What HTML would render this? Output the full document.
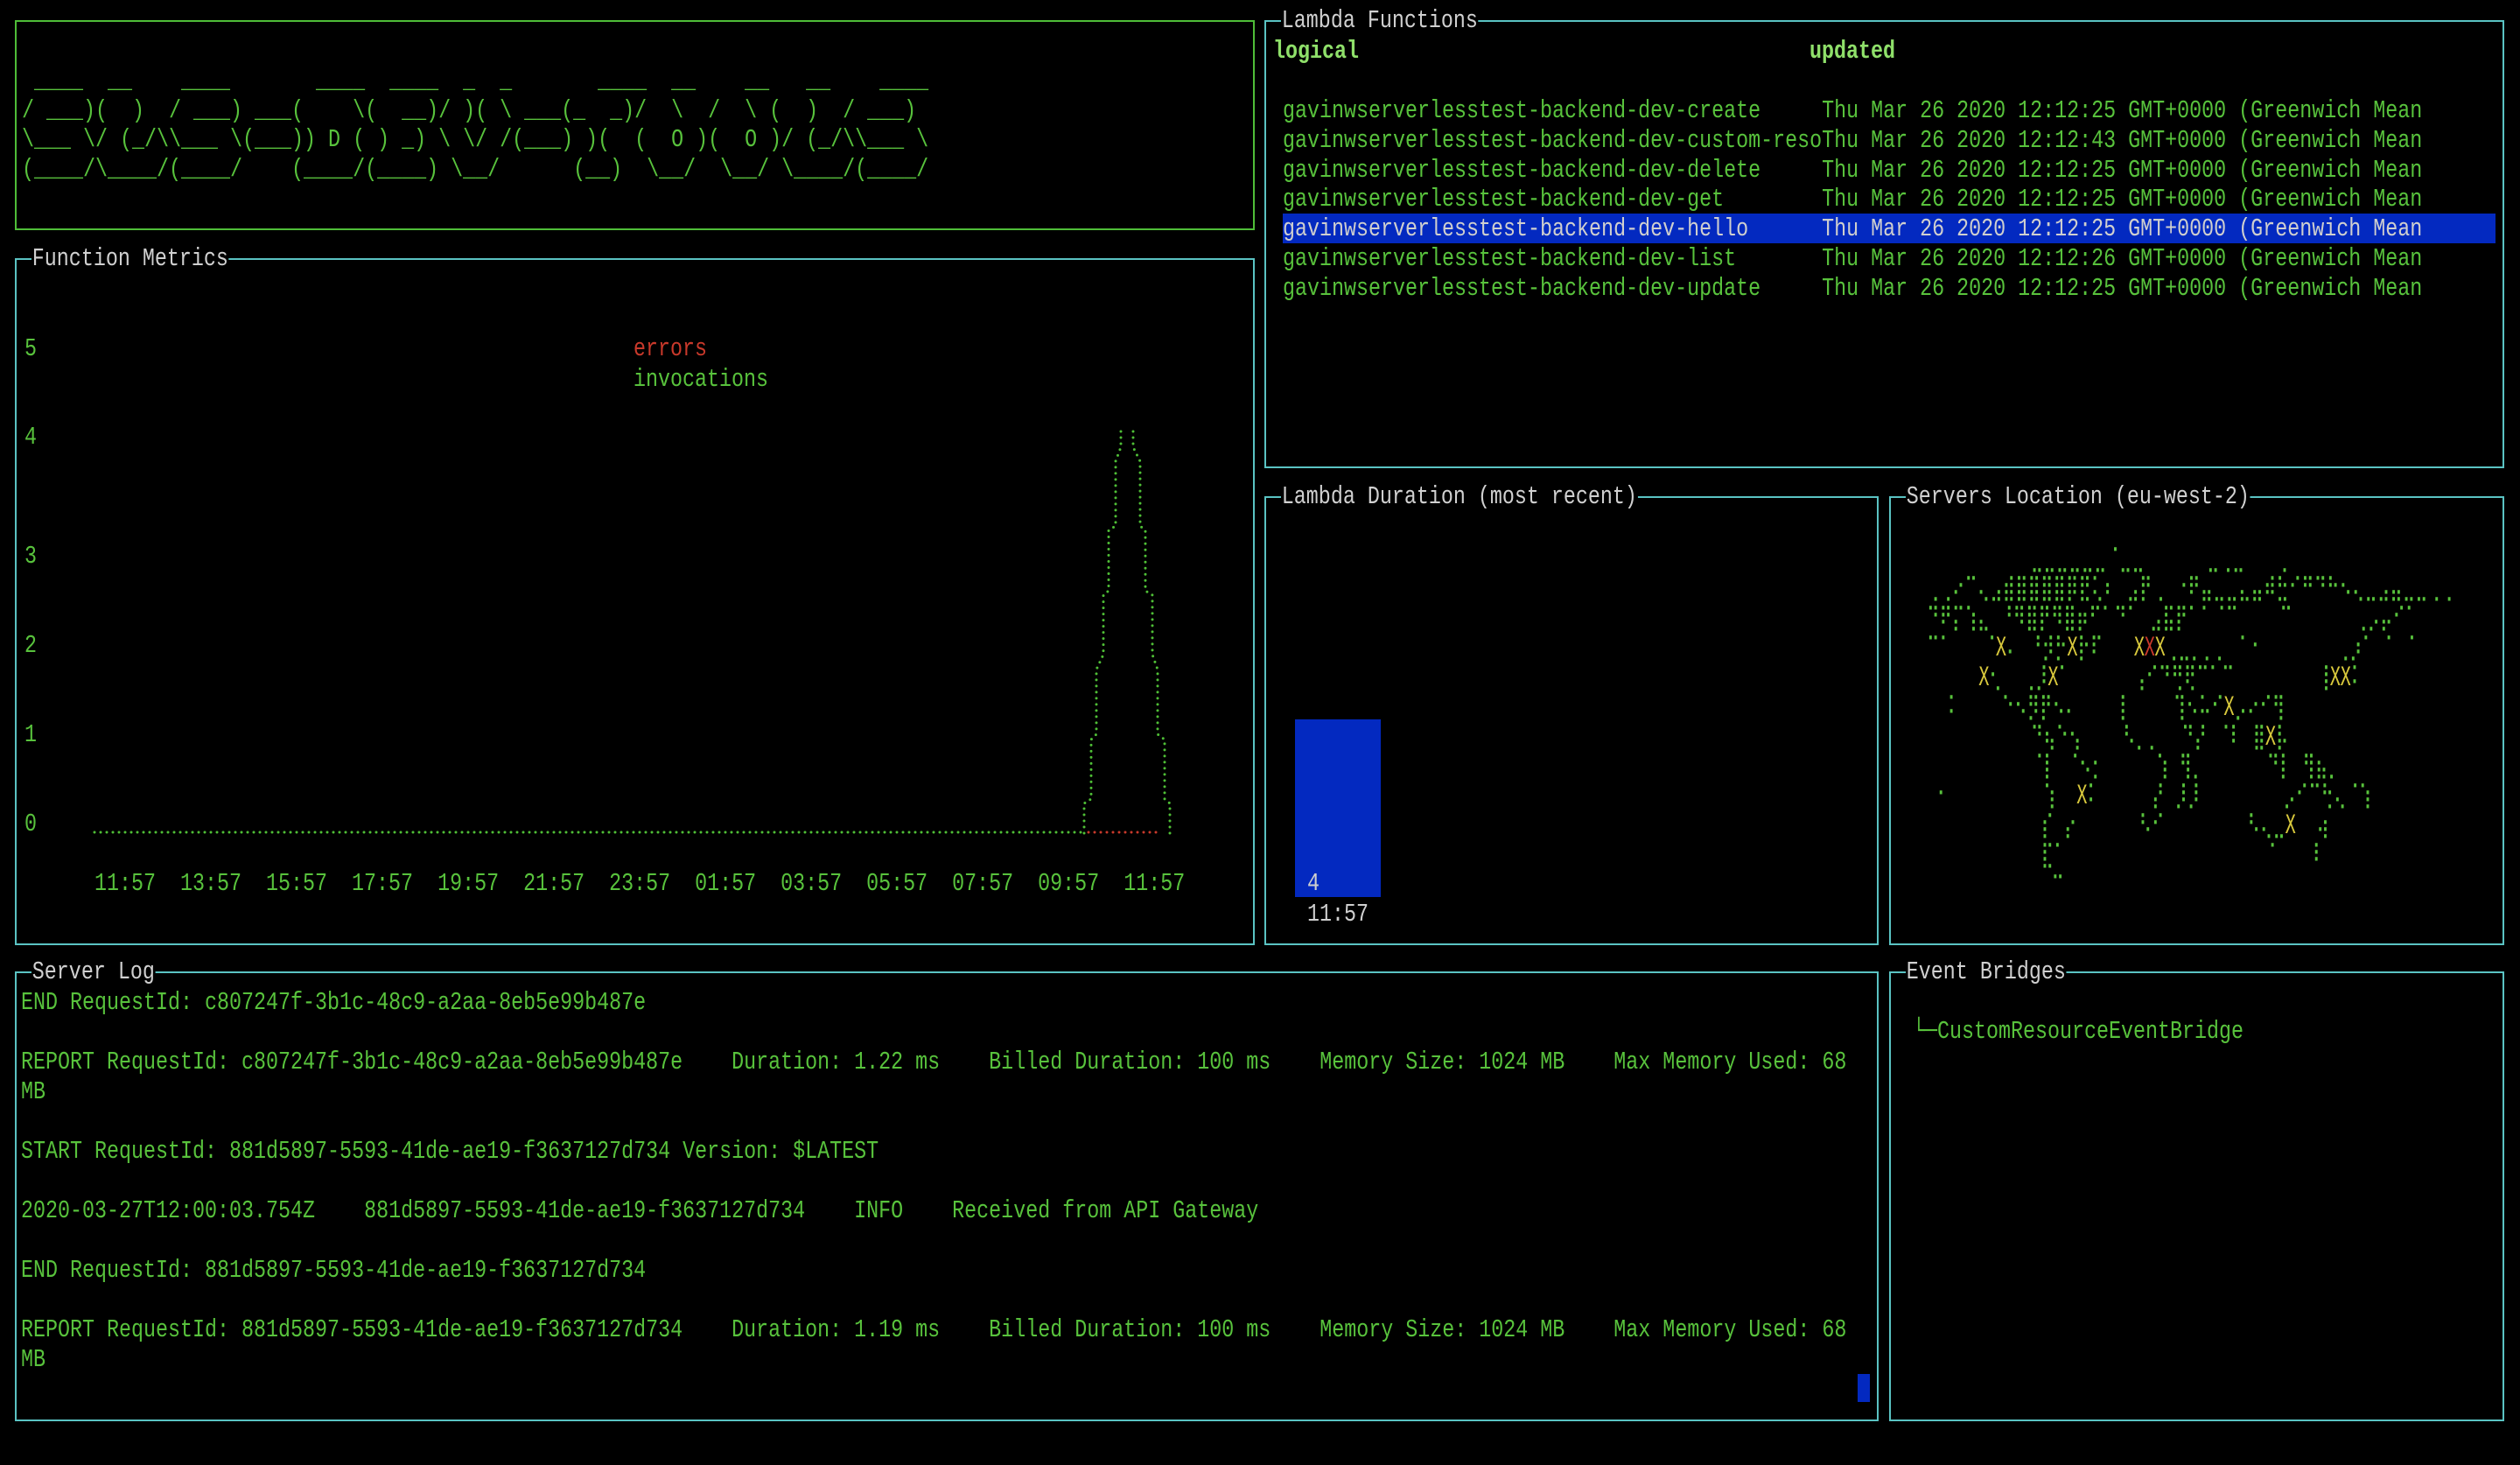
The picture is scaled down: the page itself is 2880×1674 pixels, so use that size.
<!DOCTYPE html>
<html><head><meta charset="utf-8">
<style>
html,body{margin:0;padding:0;background:#000;}
body{width:2880px;height:1674px;position:relative;overflow:hidden;}
.b{position:absolute;box-sizing:border-box;border:2px solid #5ac3c3;}
.bg{border-color:#4fbd38;}
.t{position:absolute;white-space:pre;font-family:"Liberation Mono","DejaVu Sans Mono",monospace;font-size:29px;line-height:34px;color:#58c23c;transform-origin:0 50%;transform:translateY(2px) scaleX(.8046);}
.m{font-family:"DejaVu Sans Mono","Liberation Mono",monospace;font-size:29px;transform:translateY(2px) scaleX(.68);}
.ti{color:#d0d0d0;background:#000;padding:0 1px;}
.w{color:#cfcfcf;}
.r{color:#c9392b;}
.y{color:#d8c83c;}
.hd{color:#8fe06a;font-weight:bold;}
</style></head><body>

<div class="b bg" style="left:17px;top:23px;width:1417px;height:240px"></div>
<div class="b" style="left:17px;top:295px;width:1417px;height:785px"></div>
<div class="b" style="left:1445px;top:23px;width:1417px;height:512px"></div>
<div class="b" style="left:1445px;top:567px;width:702px;height:513px"></div>
<div class="b" style="left:2159px;top:567px;width:703px;height:513px"></div>
<div class="b" style="left:17px;top:1110px;width:2130px;height:514px"></div>
<div class="b" style="left:2159px;top:1110px;width:703px;height:514px"></div>

<div class="t ti" style="left:36px;top:277px">Function Metrics</div>
<div class="t ti" style="left:1464px;top:5px">Lambda Functions</div>
<div class="t ti" style="left:1464px;top:549px">Lambda Duration (most recent)</div>
<div class="t ti" style="left:2178px;top:549px">Servers Location (eu-west-2)</div>
<div class="t ti" style="left:36px;top:1092px">Server Log</div>
<div class="t ti" style="left:2178px;top:1092px">Event Bridges</div>

<div class="t" style="left:25px;top:74px"> ____  __    ____       ____  ____  _  _       ____  __    __   __    ____ </div>
<div class="t" style="left:25px;top:108px">/ ___)(  )  / ___) ___(    \(  __)/ )( \ ___(_  _)/  \  /  \ (  )  / ___)</div>
<div class="t" style="left:25px;top:141px">\___ \/ (_/\\___ \(___)) D ( ) _) \ \/ /(___) )(  (  O )(  O )/ (_/\\___ \</div>
<div class="t" style="left:25px;top:175px">(____/\____/(____/    (____/(____) \__/      (__)  \__/  \__/ \____/(____/</div>

<div class="t hd" style="left:1455px;top:40px">logical</div>
<div class="t hd" style="left:2068px;top:40px">updated</div>
<div style="position:absolute;left:1466px;top:244px;width:1386px;height:34px;background:#0329c0"></div>
<div class="t" style="left:1466px;top:108px">gavinwserverlesstest-backend-dev-create     Thu Mar 26 2020 12:12:25 GMT+0000 (Greenwich Mean</div>
<div class="t" style="left:1466px;top:142px">gavinwserverlesstest-backend-dev-custom-resoThu Mar 26 2020 12:12:43 GMT+0000 (Greenwich Mean</div>
<div class="t" style="left:1466px;top:176px">gavinwserverlesstest-backend-dev-delete     Thu Mar 26 2020 12:12:25 GMT+0000 (Greenwich Mean</div>
<div class="t" style="left:1466px;top:209px">gavinwserverlesstest-backend-dev-get        Thu Mar 26 2020 12:12:25 GMT+0000 (Greenwich Mean</div>
<div class="t w" style="left:1466px;top:243px">gavinwserverlesstest-backend-dev-hello      Thu Mar 26 2020 12:12:25 GMT+0000 (Greenwich Mean</div>
<div class="t" style="left:1466px;top:277px">gavinwserverlesstest-backend-dev-list       Thu Mar 26 2020 12:12:26 GMT+0000 (Greenwich Mean</div>
<div class="t" style="left:1466px;top:311px">gavinwserverlesstest-backend-dev-update     Thu Mar 26 2020 12:12:25 GMT+0000 (Greenwich Mean</div>

<div class="t" style="left:28px;top:380px">5</div>
<div class="t" style="left:28px;top:481px">4</div>
<div class="t" style="left:28px;top:617px">3</div>
<div class="t" style="left:28px;top:719px">2</div>
<div class="t" style="left:28px;top:821px">1</div>
<div class="t" style="left:28px;top:923px">0</div>
<div class="t r" style="left:724px;top:380px">errors</div>
<div class="t" style="left:724px;top:415px">invocations</div>
<div class="t" style="left:108px;top:991px">11:57  13:57  15:57  17:57  19:57  21:57  23:57  01:57  03:57  05:57  07:57  09:57  11:57</div>

<svg style="position:absolute;left:0;top:0" width="2880" height="1674">
<g fill="none" stroke-width="3" stroke-linecap="round" stroke-dasharray="0 7">
<polyline stroke="#4fbf36" points="108,951 1236,951"/>
<polyline stroke="#c9392b" points="1244,951 1328,951"/>
<polyline stroke="#4fbf36" points="1281,493 1281,511 1275,527 1275,601 1267,606 1267,675 1261,680 1261,748 1253,765 1253,839 1247,845 1247,913 1239,918 1239,953"/>
<polyline stroke="#4fbf36" points="1295,493 1295,511 1303,527 1303,601 1309,606 1309,675 1317,680 1317,748 1323,765 1323,839 1331,845 1331,913 1337,918 1337,953"/>
</g>
<rect x="1480" y="822" width="98" height="203" fill="#0329c0"/>
<rect x="2123" y="1570" width="14" height="32" fill="#0329c0"/>
</svg>

<div class="t w" style="left:1494px;top:991px">4</div>
<div class="t w" style="left:1494px;top:1026px">11:57</div>

<div class="t m" style="left:2202px;top:619px">          ⣀⣀⣀⣀⣀⣀⠈⣀⣀      ⣀⢀⣀   ⢀         </div>
<div class="t m" style="left:2202px;top:652px">⢀⢀⠔⠉⢄⣠⣾⣿⣿⣿⣿⡿⣟⢅⠆ ⣠⡟⢀ ⠐⠟⣤⣀⣀⣄⣤⠾⣓⠊⠛⠙⠓⠢⢄⣀⣠⣤⣀⣀⢀⢀</div>
<div class="t m" style="left:2202px;top:686px">⠙⠟⡍⢱⣄ ⠘⠻⣿⡟⠻⣿⡶⠋⠁⠙⠁ ⣠⣯⡟⠁⠁⠈⠉    ⠉      ⢀⡠⡤⠊⠁</div>
<div class="t m" style="left:2202px;top:720px">⠉⠁   ⠈<span class="y">X</span>⠄ ⠘⡺⡓<span class="y">X</span>⡗⠏   <span class="y">X</span><span class="r">X</span><span class="y">X</span>⢀⣀⡀⡀⡀ ⠁⠂       ⢀⡰⠁ ⠁ ⠁</div>
<div class="t m" style="left:2202px;top:754px">     <span class="y">X</span>⢂  ⢀⡸<span class="y">X</span>⠁      ⢠⠊⠙⢛⢟⠉⠁⠉        ⢸<span class="y">XX</span>⠅    </div>
<div class="t m" style="left:2202px;top:788px">  ⠅    ⠑⠢⡻⡟⠢⠄    ⡇    ⢹⠢⠥⠊<span class="y">X</span>⡠⠔⠊⢻     </div>
<div class="t m" style="left:2202px;top:822px">          ⠙⢦⠑⢢    ⠣⡀⡀  ⠙⡜ ⠈⠇ ⣿<span class="y">X</span>⡧         </div>
<div class="t m" style="left:2202px;top:855px">          ⠈⡇ ⠈⠢⡂     ⢱ ⢻⡀      ⠙⡇ ⢻⣦⡀    </div>
<div class="t m" style="left:2202px;top:889px"> ⠂         ⢱  <span class="y">X</span>⠅     ⡜ ⡸⡸        ⡠⠊⠉⢓⢄⠈⢱</div>
<div class="t m" style="left:2202px;top:923px">           ⡎ ⡔      ⠣⠊        ⠣⢄⣀<span class="y">X</span>  ⢴  </div>
<div class="t m" style="left:2202px;top:957px">           ⣏⠁                   ⠈   ⠸   </div>
<div class="t m" style="left:2202px;top:985px">            ⠒                          </div>

<div class="t" style="left:24px;top:1127px">END RequestId: c807247f-3b1c-48c9-a2aa-8eb5e99b487e</div>
<div class="t" style="left:24px;top:1195px">REPORT RequestId: c807247f-3b1c-48c9-a2aa-8eb5e99b487e    Duration: 1.22 ms    Billed Duration: 100 ms    Memory Size: 1024 MB    Max Memory Used: 68</div>
<div class="t" style="left:24px;top:1229px">MB</div>
<div class="t" style="left:24px;top:1297px">START RequestId: 881d5897-5593-41de-ae19-f3637127d734 Version: $LATEST</div>
<div class="t" style="left:24px;top:1365px">2020-03-27T12:00:03.754Z    881d5897-5593-41de-ae19-f3637127d734    INFO    Received from API Gateway</div>
<div class="t" style="left:24px;top:1433px">END RequestId: 881d5897-5593-41de-ae19-f3637127d734</div>
<div class="t" style="left:24px;top:1501px">REPORT RequestId: 881d5897-5593-41de-ae19-f3637127d734    Duration: 1.19 ms    Billed Duration: 100 ms    Memory Size: 1024 MB    Max Memory Used: 68</div>
<div class="t" style="left:24px;top:1535px">MB</div>

<div class="t" style="left:2186px;top:1160px">└─CustomResourceEventBridge</div>

</body></html>
